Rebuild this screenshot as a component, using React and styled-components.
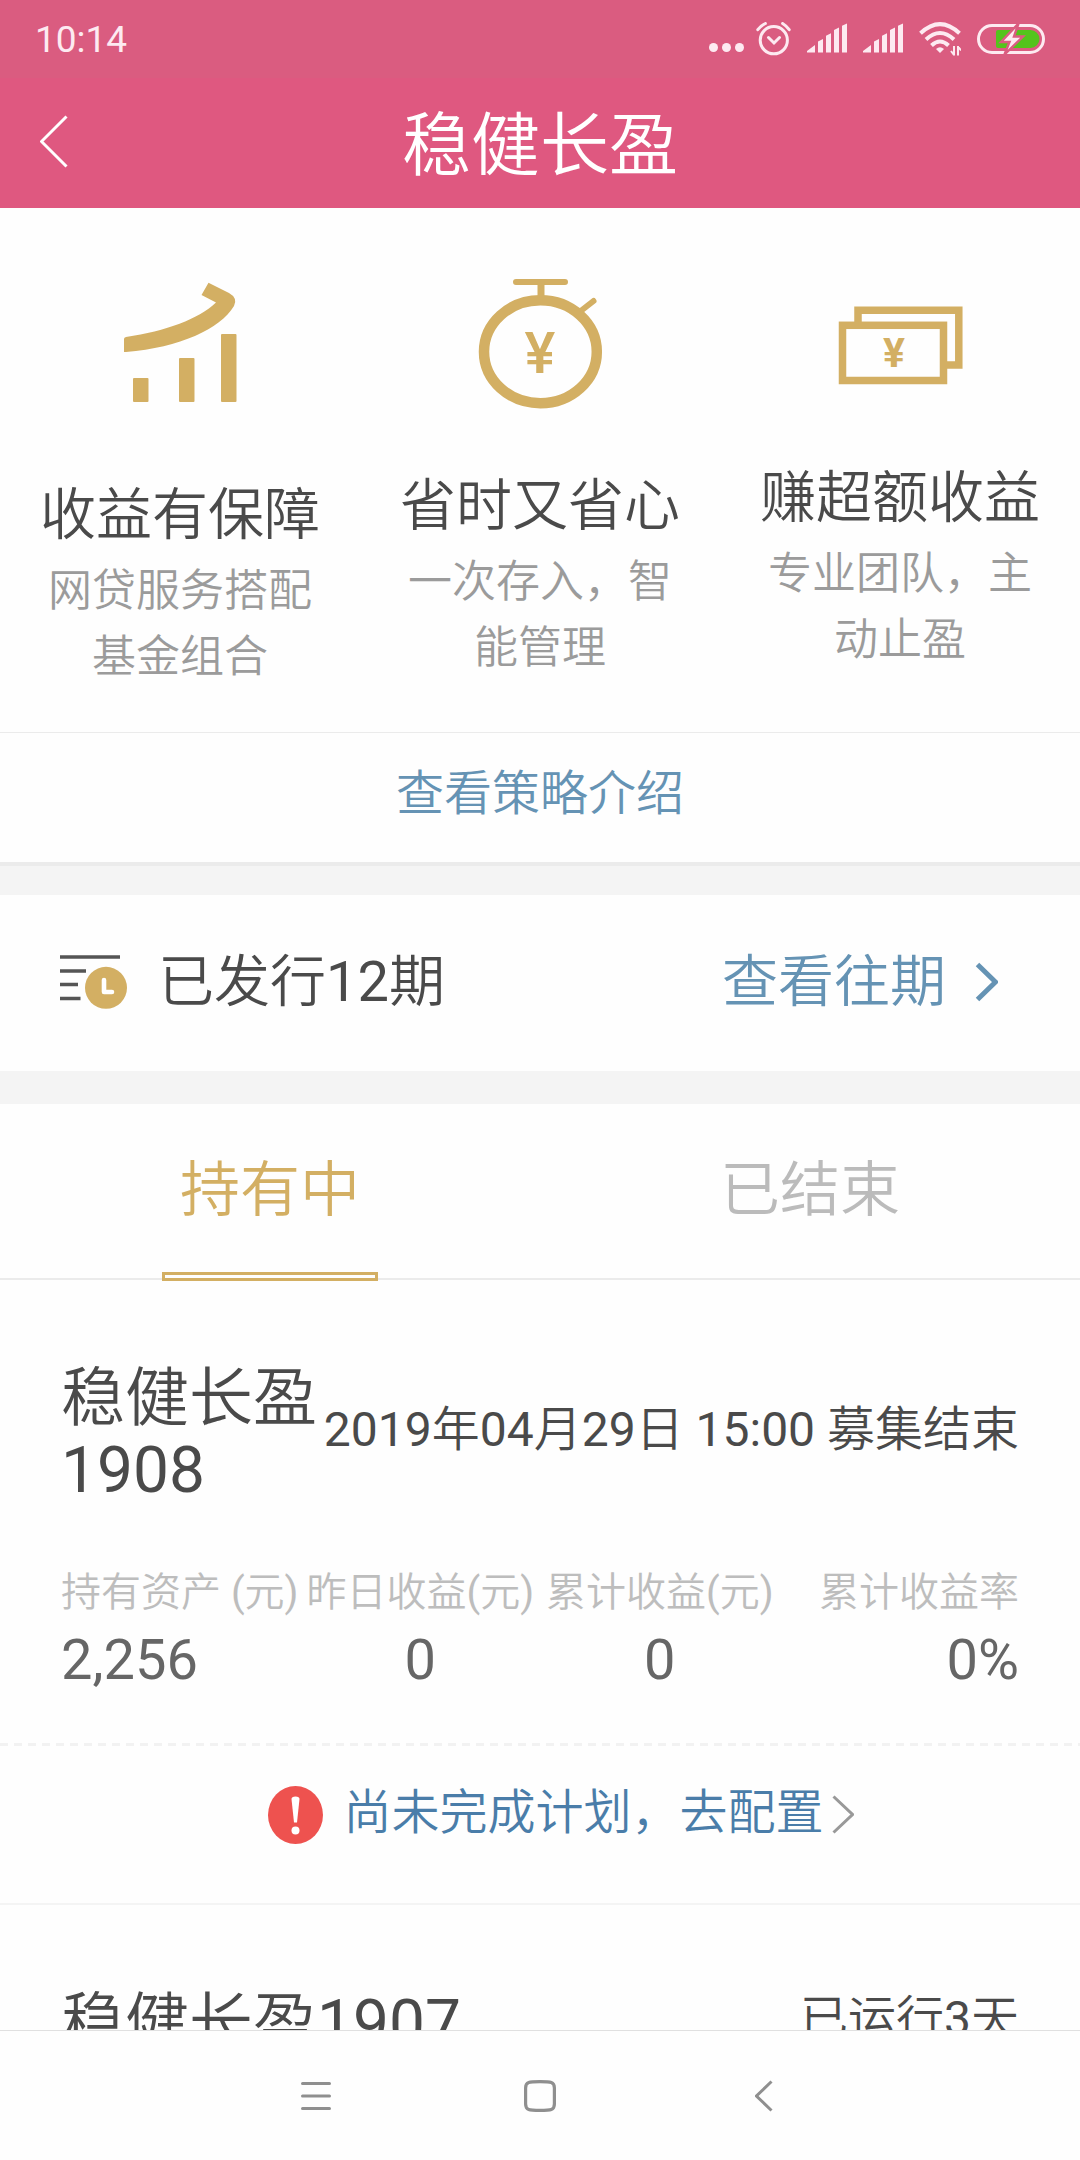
import React, { useState } from 'react';
import styled, { createGlobalStyle } from 'styled-components';

const GlobalStyle = createGlobalStyle`
  *, *::after {
    box-sizing: border-box;
  }

  body {
    margin: 0;
    background: #fefefe;
    color: #4a4a4a;
    font-family: Roboto, 'Noto Sans CJK SC DemiLight', 'Noto Sans CJK SC', sans-serif;
  }

  button {
    margin: 0;
    padding: 0;
    border: none;
    background: transparent;
    color: inherit;
    font: inherit;
    cursor: pointer;
  }

  a {
    color: inherit;
    text-decoration: none;
  }

  h1, h2, h3, p, dl, dd {
    margin: 0;
    font-weight: 400;
  }

  svg {
    display: block;
    flex: none;
  }
`;

const Screen = styled.div`
  display: flex;
  flex-direction: column;
  height: 100vh;
`;

const StatusBar = styled.div`
  display: flex;
  flex: none;
  align-items: center;
  justify-content: space-between;
  height: 78px;
  padding: 0 35px;
  background: #da5c80;
  color: #fdeaf1;
`;

const Time = styled.span`
  padding-top: 2px;
  font-size: 37px;
  line-height: 44px;
`;

const StatusIcons = styled.div`
  display: flex;
  align-items: center;
  gap: ${props => props.$gap || '16px'};
`;

const Header = styled.header`
  display: grid;
  flex: none;
  grid-template-columns: 1fr auto 1fr;
  align-items: center;
  height: 130px;
  padding: 0 40px 3px;
  background: #df5880;
  color: #ffffff;
`;

const HeaderTitle = styled.h1`
  padding-top: 10px;
  font-size: 69px;
  line-height: 80px;
`;

const BackButton = styled.button`
  justify-self: start;
`;

const Content = styled.main`
  flex: 1;
  min-height: 0;
  overflow: hidden;
`;

const Features = styled.section`
  display: grid;
  grid-template-columns: repeat(3, 1fr);
  padding: 48px 0 42px;
  border-bottom: 1px solid #ebebeb;
`;

const Feature = styled.div`
  display: flex;
  flex-direction: column;
  align-items: center;
  text-align: center;
`;

const FeatureTitle = styled.h2`
  margin-top: 48px;
  font-size: 56px;
  line-height: 80px;
`;

const FeatureText = styled.p`
  width: 280px;
  margin-top: 3px;
  color: #9b9b9b;
  font-size: 44px;
  line-height: 66px;
`;

const StrategyLink = styled.a`
  display: block;
  padding: 25px 0 32px;
  border-bottom: 4px solid #ebebeb;
  color: #6593b4;
  font-size: 48px;
  line-height: 72px;
  text-align: center;
`;

const Divider = styled.div`
  height: ${props => props.$height};
  background: #f4f4f4;
`;

const IssueRow = styled.section`
  display: flex;
  align-items: center;
  height: 176px;
  padding: 0 82px 2px 60px;
  font-size: 56px;
  line-height: 80px;
`;

const IssueCount = styled.span`
  flex: 1;
  margin-left: 30px;
`;

const HistoryLink = styled.a`
  display: flex;
  align-items: center;
  gap: 29px;
  color: #6593b4;
`;

const Tabs = styled.div`
  display: flex;
  border-bottom: 2px solid #ebebeb;
`;

const Tab = styled.button`
  position: relative;
  flex: 1;
  height: 174px;
  color: ${props => (props.$active ? '#d3af63' : '#bbbbbb')};
  font-size: 60px;
  line-height: 80px;

  &::after {
    content: '';
    display: ${props => (props.$active ? 'block' : 'none')};
    position: absolute;
    bottom: -3px;
    left: 30%;
    width: 40%;
    height: 9px;
    border: 3px solid #d3af63;
    background: #fefefe;
  }
`;

const Plan = styled.article`
  border-bottom: 2px solid #f4f4f4;
`;

const PlanHeader = styled.div`
  display: flex;
  align-items: center;
  justify-content: space-between;
  padding: 83px 61px 0;
`;

const PlanName = styled.h3`
  font-size: 64px;
  line-height: 72px;
`;

const PlanStatus = styled.span`
  padding-bottom: 10px;
  font-size: 48px;
  line-height: 60px;
  white-space: nowrap;
`;

const Stats = styled.dl`
  display: grid;
  grid-template-columns: repeat(4, 1fr);
  padding: 54px 61px 48px;
`;

const Stat = styled.div`
  text-align: ${props => props.$align || 'center'};
  white-space: nowrap;
`;

const StatLabel = styled.dt`
  color: #bdbdbd;
  font-size: 40px;
  line-height: 64px;
`;

const StatValue = styled.dd`
  color: #666666;
  font-size: 56px;
  line-height: 70px;
`;

const DashedLine = styled.div`
  height: 3px;
  background: repeating-linear-gradient(to right, #f2f2f2 0 8px, transparent 8px 14px);
`;

const AlertLink = styled.a`
  display: flex;
  align-items: center;
  justify-content: center;
  height: 157px;
  padding: 0 0 20px 42px;
  color: #4a7da9;
  font-size: 48px;
  line-height: 72px;

  svg:last-child {
    color: #999999;
  }
`;

const AlertText = styled.span`
  margin: 0 8px 0 20px;
  padding-bottom: 4px;
`;

const SystemNav = styled.nav`
  display: flex;
  flex: none;
  justify-content: center;
  height: 130px;
  border-top: 1px solid #e0e0e0;
  color: #8f8f8f;
`;

const NavButton = styled.button`
  display: flex;
  align-items: center;
  justify-content: center;
  width: 224px;
`;

function DotsIcon() {
  return (
    <svg width="35" height="34" viewBox="0 0 35 34" fill="currentColor">
      <circle cx="4.5" cy="25.5" r="4.5" />
      <circle cx="17.5" cy="25.5" r="4.5" />
      <circle cx="30.5" cy="25.5" r="4.5" />
    </svg>
  );
}

function AlarmIcon() {
  return (
    <svg width="35" height="34" viewBox="0 0 35 34" fill="none" stroke="currentColor" strokeWidth="3" strokeLinecap="round">
      <circle cx="17.8" cy="18.2" r="13.6" />
      <path d="M12.5 15.5l5.5 5.5 5.5-5.5M1.8 7.7Q5 3.500 9.400 1.500M33.200 7.700Q30 3.500 26.600 1.500" />
    </svg>
  );
}

function SignalIcon() {
  return (
    <svg width="40" height="32" viewBox="0 0 40 32" fill="currentColor">
      <path d="M0 29.500v-1.600L8 22v7.500zM11 29.500V18.600l5-2.600v13.500zM19 29.500V12.800l5-2.600v19.300zM27 29.500V7l5-2.600v25.100zM35 29.500V2.800L40 .5v29z" />
    </svg>
  );
}

function WifiIcon() {
  return (
    <svg width="42" height="34" viewBox="0 0 42 34" fill="none" stroke="currentColor">
      <path d="M1.500 11.300Q21-7 40.500 11.300" strokeWidth="4" />
      <path d="M7 17.500Q21 4.500 35 17.500" strokeWidth="4" />
      <path d="M12.500 23.500Q21 15.500 29.500 23.500" strokeWidth="4" />
      <path d="M17 27Q21 23.500 25 27L21 31z" fill="currentColor" stroke="none" />
      <path d="M35 24v9.500M39 33.500V24M35 33l-3-4M39 24.500l3 4" strokeWidth="2" />
    </svg>
  );
}

function BatteryIcon() {
  return (
    <svg width="68" height="32" viewBox="0 0 68 32">
      <rect x="1.5" y="2.5" width="65" height="27" rx="13.5" fill="none" stroke="currentColor" strokeWidth="3" />
      <path d="M21 7h32.500a9 9 0 010 18H21q-2 0-2-2V9q0-2 2-2z" fill="#54c41c" />
      <path d="M41.500.5L24 19h8.500l-5 12.500L46 13.500h-9z" fill="currentColor" stroke="#da5c80" strokeWidth="2.4" />
    </svg>
  );
}

function Chevron({ width, height, stroke, left }) {
  const inset = stroke / 2;
  const tip = left ? inset : width - inset;
  const end = left ? width - inset : inset;
  return (
    <svg width={width} height={height} viewBox={`0 0 ${width} ${height}`} fill="none" stroke="currentColor" strokeWidth={stroke}>
      <path d={`M${end} ${inset}L${tip} ${height / 2}L${end} ${height - inset}`} />
    </svg>
  );
}

function GrowthIcon() {
  return (
    <svg width="180" height="171" viewBox="0 0 180 171" fill="#d3af63">
      <path d="M34 83q0-1.500 2-2C76 75 109 63 126 46.500L111.500 39 118.500 26.700 139 37q9 5 5 13C130 73 90 91.500 36 96h-2z" />
      <rect x="43" y="122" width="15.5" height="24" rx="1" />
      <rect x="89" y="102" width="15.5" height="44" rx="1" />
      <rect x="131" y="78" width="15.5" height="68" rx="1" />
    </svg>
  );
}

function StopwatchIcon() {
  return (
    <svg width="180" height="162" viewBox="0 0 180 162" fill="none" stroke="#d3af63" strokeLinecap="round">
      <ellipse cx="90.4" cy="95.7" rx="56.4" ry="51.5" strokeWidth="10.5" />
      <path d="M66 26h49M132 54l11.500-9" strokeWidth="6" />
      <path d="M91 27v13" strokeWidth="7" />
      <text x="90" y="117" fill="#d3af63" stroke="none" fontFamily="Roboto" fontSize="58" fontWeight="500" textAnchor="middle">¥</text>
    </svg>
  );
}

function CashIcon() {
  return (
    <svg width="180" height="154" viewBox="0 0 180 154" fill="none" stroke="#d3af63" strokeWidth="7.5">
      <rect x="32.5" y="69.3" width="101" height="55.2" />
      <path d="M48 66V54.300h100.800V109H137" />
      <text x="84" y="111" fill="#d3af63" stroke="none" fontFamily="Roboto" fontSize="41" fontWeight="700" textAnchor="middle">¥</text>
    </svg>
  );
}

function IssueIcon() {
  return (
    <svg width="68" height="54" viewBox="0 0 68 54" fill="none">
      <path d="M0 2h60M0 16h26M0 29.500h18M0 43.500h20.500" stroke="#555555" strokeWidth="3.6" />
      <circle cx="46" cy="32.8" r="21" fill="#d3af63" />
      <path d="M44 25v12h8" stroke="#ffffff" strokeWidth="4.6" strokeLinecap="round" strokeLinejoin="round" />
    </svg>
  );
}

function AlertIcon() {
  return (
    <svg width="55" height="58" viewBox="0 0 55 58">
      <ellipse cx="27.5" cy="29" rx="27.5" ry="29" fill="#ee524f" />
      <path d="M23.500 13q0-2.500 4-2.500t4 2.500L29 36.500h-3z" fill="#ffffff" />
      <circle cx="27.5" cy="44.5" r="4" fill="#ffffff" />
    </svg>
  );
}

const features = [
  { title: '收益有保障', text: '网贷服务搭配基金组合', Icon: GrowthIcon },
  { title: '省时又省心', text: '一次存入，智能管理', Icon: StopwatchIcon },
  { title: '赚超额收益', text: '专业团队，主动止盈', Icon: CashIcon },
];

const tabs = ['持有中', '已结束'];

const stats = [
  { label: '持有资产 (元)', value: '2,256', align: 'left' },
  { label: '昨日收益(元)', value: '0' },
  { label: '累计收益(元)', value: '0' },
  { label: '累计收益率', value: '0%', align: 'right' },
];

function App() {
  const [activeTab, setActiveTab] = useState(tabs[0]);

  return (
    <>
      <GlobalStyle />
      <Screen>
        <StatusBar>
          <Time>10:14</Time>
          <StatusIcons>
            <StatusIcons $gap="12px">
              <DotsIcon />
              <AlarmIcon />
            </StatusIcons>
            <SignalIcon />
            <SignalIcon />
            <WifiIcon />
            <BatteryIcon />
          </StatusIcons>
        </StatusBar>

        <Header>
          <BackButton aria-label="返回">
            <Chevron width={28} height={53} stroke={3} left />
          </BackButton>
          <HeaderTitle>稳健长盈</HeaderTitle>
        </Header>

        <Content>
          <Features>
            {features.map(({ title, text, Icon }) => (
              <Feature key={title}>
                <Icon />
                <FeatureTitle>{title}</FeatureTitle>
                <FeatureText>{text}</FeatureText>
              </Feature>
            ))}
          </Features>
          <StrategyLink href="#strategy">查看策略介绍</StrategyLink>
          <Divider $height="29px" />

          <IssueRow>
            <IssueIcon />
            <IssueCount>已发行12期</IssueCount>
            <HistoryLink href="#history">
              查看往期
              <Chevron width={23} height={40} stroke={5} />
            </HistoryLink>
          </IssueRow>
          <Divider $height="33px" />

          <Tabs role="tablist">
            {tabs.map(tab => (
              <Tab
                key={tab}
                role="tab"
                aria-selected={tab === activeTab}
                $active={tab === activeTab}
                onClick={() => setActiveTab(tab)}
              >
                {tab}
              </Tab>
            ))}
          </Tabs>

          <Plan>
            <PlanHeader>
              <PlanName>稳健长盈1908</PlanName>
              <PlanStatus>2019年04月29日 15:00 募集结束</PlanStatus>
            </PlanHeader>
            <Stats>
              {stats.map(({ label, value, align }) => (
                <Stat key={label} $align={align}>
                  <StatLabel>{label}</StatLabel>
                  <StatValue>{value}</StatValue>
                </Stat>
              ))}
            </Stats>
            <DashedLine />
            <AlertLink href="#configure">
              <AlertIcon />
              <AlertText>尚未完成计划，去配置</AlertText>
              <Chevron width={22} height={39} stroke={3} />
            </AlertLink>
          </Plan>

          <Plan>
            <PlanHeader>
              <PlanName>稳健长盈1907</PlanName>
              <PlanStatus>已运行3天</PlanStatus>
            </PlanHeader>
          </Plan>
        </Content>

        <SystemNav>
          <NavButton aria-label="菜单">
            <svg width="30" height="28" viewBox="0 0 30 28" stroke="currentColor" strokeWidth="3" strokeLinecap="round">
              <path d="M1.500 1.500h27M1.500 14h27M1.500 26.500h27" />
            </svg>
          </NavButton>
          <NavButton aria-label="主屏幕">
            <svg width="32" height="32" viewBox="0 0 32 32" fill="none" stroke="currentColor" strokeWidth="3.2">
              <path d="M16 1.700C27 1.700 30.400 2 30.400 8v16c0 6-3.400 6.300-14.400 6.300S1.600 30 1.600 24V8c0-6 3.400-6.300 14.400-6.300z" />
            </svg>
          </NavButton>
          <NavButton aria-label="后退">
            <Chevron width={18} height={32} stroke={3} left />
          </NavButton>
        </SystemNav>
      </Screen>
    </>
  );
}

export default App;
